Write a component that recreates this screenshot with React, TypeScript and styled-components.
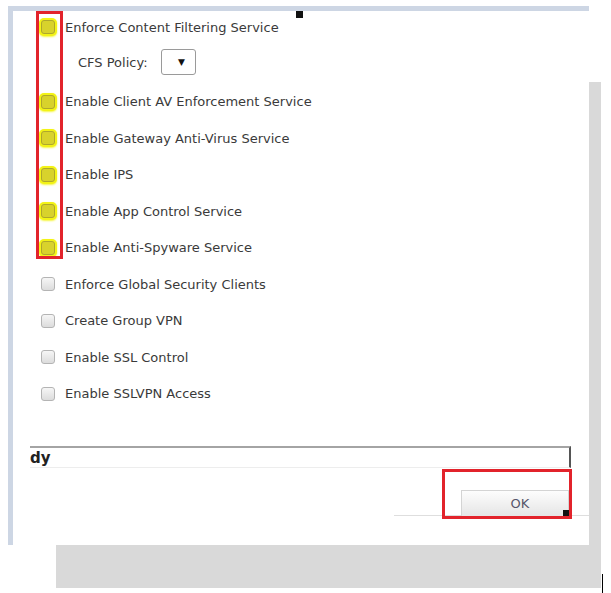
import React from "react";
import styled, { createGlobalStyle } from "styled-components";

const Global = createGlobalStyle`
  html, body { margin: 0; padding: 0; background: #ffffff; }
  body { font-family: "DejaVu Sans", "Liberation Sans", sans-serif; }
`;

const Page = styled.div`
  display: grid;
  grid-template-columns: 581px 12px 3px;
  grid-template-rows: 539px 48px;
  padding: 6px 0 0 8px;
`;

const Panel = styled.div`
  grid-column: 1;
  grid-row: 1;
  position: relative;
  box-sizing: border-box;
  border-top: 5px solid #cdd6e4;
  border-left: 5px solid #cdd6e4;
  background: #ffffff;
  display: flex;
  flex-direction: column;
`;

const SideBar = styled.div`
  grid-column: 2;
  grid-row: 1 / 3;
  margin-top: 76px;
  height: 506px;
  background: #d9d9d9;
`;

const BottomStrip = styled.div`
  grid-column: 1;
  grid-row: 2;
  margin-left: 48px;
  height: 43px;
  background: #d9d9d9;
`;

const Caret = styled.div`
  grid-column: 3;
  grid-row: 2;
  margin: 29px 0 0 1px;
  width: 1px;
  height: 19px;
  background: #000;
`;

const CheckList = styled.div`
  display: flex;
  flex-direction: column;
  margin-top: -2px;
  padding-left: 27px;
`;

const Row = styled.div`
  display: flex;
  align-items: center;
  height: 36.5px;
  gap: 10px;
`;

const Box = styled.span<{ $hl?: boolean }>`
  display: inline-block;
  box-sizing: border-box;
  width: 14px;
  height: 14px;
  margin-left: 1px;
  border-radius: 3px;
  border: 1px solid ${(p) => (p.$hl ? "#aea72c" : "#b4b4b4")};
  background: ${(p) =>
    p.$hl ? "#d8d22c" : "linear-gradient(#f6f6f6, #dcdcdc)"};
  box-shadow: ${(p) => (p.$hl ? "0 0 0 2px #f3f316, 0 1px 2px 2px #f6f640" : "none")};
`;

const Label = styled.span`
  font-size: 13px;
  color: #3a3a3a;
  white-space: nowrap;
`;

const PolicyRow = styled.div`
  display: flex;
  align-items: center;
  box-sizing: border-box;
  height: 38px;
  padding: 0 0 5px 38px;
  gap: 13px;
`;

const Select = styled.div`
  box-sizing: border-box;
  width: 35px;
  height: 26px;
  border: 1px solid #9a9a9a;
  border-radius: 3px;
  display: flex;
  align-items: center;
  justify-content: center;
  font-size: 9px;
  color: #111;
  padding-left: 7px;
`;

const RedFrame = styled.div<{ $l: number; $t: number; $w: number; $h: number }>`
  position: absolute;
  left: ${(p) => p.$l}px;
  top: ${(p) => p.$t}px;
  width: ${(p) => p.$w}px;
  height: ${(p) => p.$h}px;
  box-sizing: border-box;
  border: 3px solid #e2232b;
  pointer-events: none;
`;

const Handle = styled.div`
  position: absolute;
  width: 6px;
  height: 6px;
  background: #111;
`;

const TopHandle = styled(Handle)`
  left: 283px;
  top: 0;
  width: 7px;
  height: 7px;
`;

const TableHeader = styled.div`
  margin: auto 18px 0 17px;
  box-sizing: border-box;
  height: 22px;
  border-top: 2px solid #a4a4a4;
  border-right: 2px solid #555;
  border-bottom: 1px solid #ededed;
  display: flex;
  align-items: center;
  font-family: "DejaVu Sans", sans-serif;
  font-weight: bold;
  font-size: 15px;
  color: #222;
`;

const Footer = styled.div`
  height: 77px;
  display: flex;
  flex-direction: column;
  align-items: flex-end;
  padding-top: 22px;
  box-sizing: border-box;
`;

const ButtonWrap = styled.div`
  position: relative;
  margin-right: 20px;
`;

const OkButton = styled.button`
  display: block;
  box-sizing: border-box;
  width: 108px;
  height: 26px;
  border: 1px solid #d4d4d4;
  border-bottom: none;
  background: linear-gradient(#fdfdfd, #e5e5e5);
  font-family: "DejaVu Sans", sans-serif;
  font-size: 13px;
  color: #56566a;
  padding: 0 0 0 10px;
`;

const CornerHandle = styled(Handle)`
  right: 0;
  bottom: 0;
`;

const FooterRule = styled.div`
  width: 195px;
  height: 1px;
  margin-top: -1px;
  background: #dedede;
`;

const checked = [
  "Enable Client AV Enforcement Service",
  "Enable Gateway Anti-Virus Service",
  "Enable IPS",
  "Enable App Control Service",
  "Enable Anti-Spyware Service",
];

const unchecked = [
  "Enforce Global Security Clients",
  "Create Group VPN",
  "Enable SSL Control",
  "Enable SSLVPN Access",
];

export default function App() {
  return (
    <>
      <Global />
      <Page>
        <Panel>
          <CheckList>
            <Row>
              <Box $hl />
              <Label>Enforce Content Filtering Service</Label>
            </Row>
            <PolicyRow>
              <Label>CFS Policy:</Label>
              <Select>▼</Select>
            </PolicyRow>
            {checked.map((t) => (
              <Row key={t}>
                <Box $hl />
                <Label>{t}</Label>
              </Row>
            ))}
            {unchecked.map((t) => (
              <Row key={t}>
                <Box />
                <Label>{t}</Label>
              </Row>
            ))}
          </CheckList>
          <TableHeader>dy</TableHeader>
          <Footer>
            <ButtonWrap>
              <OkButton>OK</OkButton>
              <CornerHandle />
              <RedFrame $l={-19} $t={-21} $w={130} $h={50} />
            </ButtonWrap>
            <FooterRule />
          </Footer>
          <RedFrame $l={23} $t={0} $w={27} $h={248} />
          <TopHandle />
        </Panel>
        <SideBar />
        <BottomStrip />
        <Caret />
      </Page>
    </>
  );
}
